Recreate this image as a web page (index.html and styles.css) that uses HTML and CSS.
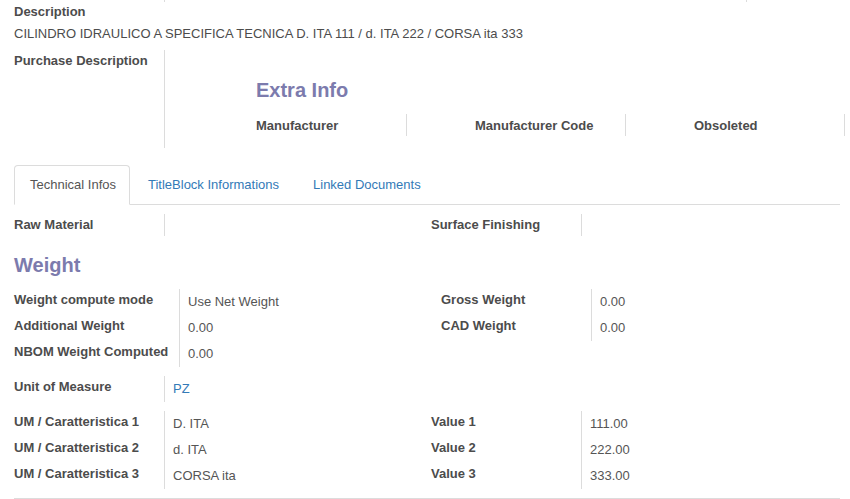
FILE: index.html
```html
<!DOCTYPE html>
<html>
<head>
<meta charset="utf-8">
<title>Product</title>
<link rel="stylesheet" href="styles.css">
</head>
<body>
<div class="sheet">
  <div class="stubs"><span class="stub stub-a"></span><span class="stub stub-b"></span></div>

  <div class="desc">
    <div class="lbl">Description</div>
    <div class="desc-val">CILINDRO IDRAULICO A SPECIFICA TECNICA D. ITA 111 / d. ITA 222 / CORSA ita 333</div>
  </div>

  <div class="purchase">
    <div class="lbl cell-l">Purchase Description</div>
    <div class="extra">
      <h2 class="title extra-title">Extra Info</h2>
      <div class="cols">
        <div class="col">Manufacturer</div>
        <div class="col">Manufacturer Code</div>
        <div class="col">Obsoleted</div>
      </div>
    </div>
  </div>

  <ul class="tabs">
    <li class="tab active"><a>Technical Infos</a></li>
    <li class="tab"><a>TitleBlock Informations</a></li>
    <li class="tab"><a>Linked Documents</a></li>
  </ul>

  <div class="pair pair-raw">
    <div class="grp">
      <div class="lbl l short">Raw Material</div><div class="v"></div>
    </div>
    <div class="grp">
      <div class="lbl l short">Surface Finishing</div><div class="v"></div>
    </div>
  </div>

  <h2 class="title weight-title">Weight</h2>

  <div class="pair pair-weight">
    <div class="grp grp-wide">
      <div class="lbl l">Weight compute mode</div><div class="v">Use Net Weight</div>
      <div class="lbl l">Additional Weight</div><div class="v">0.00</div>
      <div class="lbl l">NBOM Weight Computed</div><div class="v">0.00</div>
    </div>
    <div class="grp">
      <div class="lbl l">Gross Weight</div><div class="v">0.00</div>
      <div class="lbl l">CAD Weight</div><div class="v">0.00</div>
    </div>
  </div>

  <div class="grp grp-uom">
    <div class="lbl l">Unit of Measure</div><div class="v"><a class="link">PZ</a></div>
  </div>

  <div class="pair pair-um">
    <div class="grp">
      <div class="lbl l">UM / Caratteristica 1</div><div class="v">D. ITA</div>
      <div class="lbl l">UM / Caratteristica 2</div><div class="v">d. ITA</div>
      <div class="lbl l">UM / Caratteristica 3</div><div class="v">CORSA ita</div>
    </div>
    <div class="grp">
      <div class="lbl l">Value 1</div><div class="v">111.00</div>
      <div class="lbl l">Value 2</div><div class="v">222.00</div>
      <div class="lbl l">Value 3</div><div class="v">333.00</div>
    </div>
  </div>

  <div class="bottom-line"></div>
</div>
</body>
</html>
```

FILE: styles.css
```css
* { box-sizing: border-box; }

html, body {
  margin: 0;
  padding: 0;
  background: #ffffff;
}

body {
  font-family: "Liberation Sans", Arial, sans-serif;
  font-size: 13px;
  color: #4c4c4c;
  line-height: 18px;
  overflow: hidden;
}

.sheet {
  padding: 0 10px 0 14px;
}

.lbl {
  font-weight: bold;
  color: #4c4c4c;
}

/* remnants of separators from rows above */
.stubs {
  display: flex;
  height: 2px;
}
.stub {
  display: block;
  height: 2px;
  border-right: 1px solid #dcdcdc;
}
.stub-a { width: 151px; }
.stub-b { width: 582px; }

/* description */
.desc {
  padding-top: 1px;
}
.desc .desc-val {
  margin-top: 4px;
}

/* purchase description row */
.purchase {
  display: grid;
  grid-template-columns: 151px 1fr;
  margin-top: 7px;
}
.cell-l {
  border-right: 1px solid #dcdcdc;
  padding-top: 2px;
}
.extra {
  padding: 28px 0 12px 23px;
}
.title {
  margin: 0;
  font-size: 20px;
  line-height: 24px;
  font-weight: bold;
  color: #7c7bad;
}
.extra-title {
  padding-left: 68px;
}
.cols {
  display: flex;
  margin-top: 12px;
}
.col {
  width: 219px;
  height: 22px;
  padding: 3px 0 0 68px;
  border-right: 1px solid #dcdcdc;
  font-weight: bold;
  white-space: nowrap;
}

/* tabs */
.tabs {
  list-style: none;
  margin: 17px 0 0 0;
  padding: 0;
  display: flex;
  border-bottom: 1px solid #dcdcdc;
}
.tab {
  margin: 0 2px -1px 0;
}
.tab a {
  display: block;
  padding: 10px 15px;
  line-height: 18px;
  border: 1px solid transparent;
  border-radius: 4px 4px 0 0;
  color: #337ab7;
}
.tab.active a {
  padding-right: 13px;
  color: #555555;
  background: #ffffff;
  border-color: #dcdcdc #dcdcdc transparent #dcdcdc;
}

/* field groups */
.pair {
  display: grid;
  grid-template-columns: 417px 1fr;
  align-items: start;
}
.grp {
  display: grid;
  grid-template-columns: 151px 1fr;
}
.l {
  border-right: 1px solid #dcdcdc;
  padding: 2px 0 6px 0;
  white-space: nowrap;
}
.l.short {
  padding-bottom: 2px;
}
.v {
  padding: 4px 8px 4px 8px;
  color: #555555;
}

.pair-raw {
  margin-top: 9px;
}

.weight-title {
  margin-top: 17px;
}

.pair-weight {
  grid-template-columns: 427px 1fr;
  margin-top: 12px;
}
.grp-wide {
  grid-template-columns: 166px 1fr;
}

.grp-uom {
  margin-top: 9px;
}
.link {
  color: #337ab7;
}

.pair-um {
  margin-top: 9px;
}

.bottom-line {
  margin-top: 9px;
  border-top: 1px solid #dcdcdc;
  height: 1px;
}
```
